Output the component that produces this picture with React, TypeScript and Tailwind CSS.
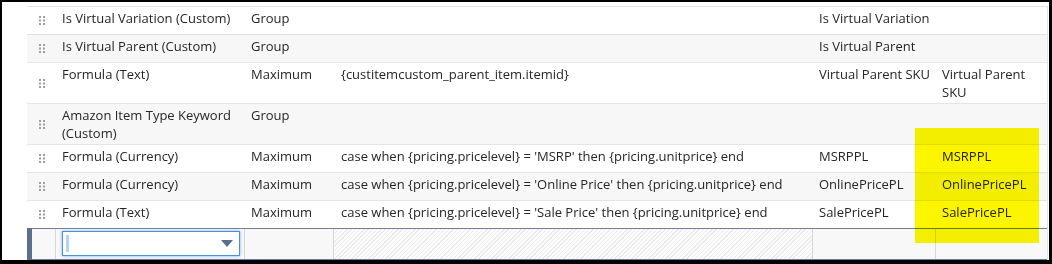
import React from 'react';

type Row = {
  field: string;
  summary: string;
  formula: string;
  label: string;
  custom: string;
};

const rows: Row[] = [
  { field: 'Is Virtual Variation (Custom)', summary: 'Group', formula: '', label: 'Is Virtual Variation', custom: '' },
  { field: 'Is Virtual Parent (Custom)', summary: 'Group', formula: '', label: 'Is Virtual Parent', custom: '' },
  {
    field: 'Formula (Text)',
    summary: 'Maximum',
    formula: '{custitemcustom_parent_item.itemid}',
    label: 'Virtual Parent SKU',
    custom: 'Virtual Parent SKU',
  },
  { field: 'Amazon Item Type Keyword (Custom)', summary: 'Group', formula: '', label: '', custom: '' },
  {
    field: 'Formula (Currency)',
    summary: 'Maximum',
    formula: "case when {pricing.pricelevel} = 'MSRP' then {pricing.unitprice} end",
    label: 'MSRPPL',
    custom: 'MSRPPL',
  },
  {
    field: 'Formula (Currency)',
    summary: 'Maximum',
    formula: "case when {pricing.pricelevel} = 'Online Price' then {pricing.unitprice} end",
    label: 'OnlinePricePL',
    custom: 'OnlinePricePL',
  },
  {
    field: 'Formula (Text)',
    summary: 'Maximum',
    formula: "case when {pricing.pricelevel} = 'Sale Price' then {pricing.unitprice} end",
    label: 'SalePricePL',
    custom: 'SalePricePL',
  },
];

const DragHandle: React.FC = () => (
  <svg width="6" height="9" viewBox="0 0 6 9" className="block">
    {[0, 3.5, 7].map((y) => (
      <g key={y} fill="#9e9e9e">
        <rect x="0" y={y} width="2" height="2" />
        <rect x="4" y={y} width="2" height="2" />
      </g>
    ))}
  </svg>
);

const App: React.FC = () => {
  return (
    <div
      className="w-[1052px] h-[264px] bg-black pt-[2px] pl-[2px] pr-[3px] pb-[4px] text-[13px] leading-[18px] text-[#262626]"
      style={{ fontFamily: '"Open Sans", "Liberation Sans", sans-serif' }}
    >
      <div className="relative h-full bg-white pl-[25px] pt-[4px] overflow-hidden">
        <div className="w-[1021px] border-t border-r border-[#e4e4e4]">
          {rows.map((r, i) => (
            <div
              key={i}
              className={`grid grid-cols-[29px_189px_89px_479px_123px_112px] ${
                i === rows.length - 1 ? 'min-h-[27px]' : 'min-h-[28px] border-b border-[#e4e4e4]'
              } ${i % 2 === 1 ? 'bg-[#f7f7f7]' : 'bg-white'}`}
            >
              {/* drag handle */}
              <div className="flex items-center pl-[12px]">
                <DragHandle />
              </div>
              <div className="pt-[2px] pb-[2px] pl-[6px] pr-[4px]">{r.field}</div>
              <div className="pt-[2px] pb-[2px] pl-[6px] pr-[4px]">{r.summary}</div>
              <div className="pt-[2px] pb-[2px] pl-[7px] pr-[4px]">{r.formula}</div>
              <div className="pt-[2px] pb-[2px] pl-[6px] pr-[2px]">{r.label}</div>
              <div className="pt-[2px] pb-[2px] pl-[6px] pr-[4px]">{r.custom}</div>
            </div>
          ))}

          {/* New line edit row */}
          <div className="flex">
            <div className="w-[5px] bg-[#5c6f8e]" />
            <div className="grid grid-cols-[24px_189px_89px_479px_123px_111px] h-[32px] border-y border-[#6d7d9a] bg-[#f8f8f8]">
              <div className="border-r border-[#d6d6d6]" />
              <div className="border-r border-[#d6d6d6] pl-[6px] pt-[2px]">
                <div className="flex items-center h-[25px] w-[178px] bg-white border border-[#4d8fdb] shadow-[0_0_3px_#7fb0ea] pl-[3px] pr-[6px]">
                  <span className="w-[3px] h-[17px] bg-[#b3d4f5]" />
                  <span className="flex-1" />
                  <svg width="12" height="7" viewBox="0 0 12 7">
                    <path d="M0 0 L12 0 L6 7 Z" fill="#5a6d8c" />
                  </svg>
                </div>
              </div>
              <div className="border-r border-[#d6d6d6]" />
              <div className="border-r border-[#d6d6d6] bg-[repeating-linear-gradient(135deg,#ebebeb_0px,#ebebeb_1px,#fcfcfc_1px,#fcfcfc_3px)]" />
              <div className="border-r border-[#d6d6d6]" />
              <div />
            </div>
          </div>
        </div>

        {/* yellow highlight */}
        <div className="absolute left-[913px] top-[126px] w-[124px] h-[115px] bg-[#fbf500] mix-blend-multiply" />
      </div>
    </div>
  );
};

export default App;
